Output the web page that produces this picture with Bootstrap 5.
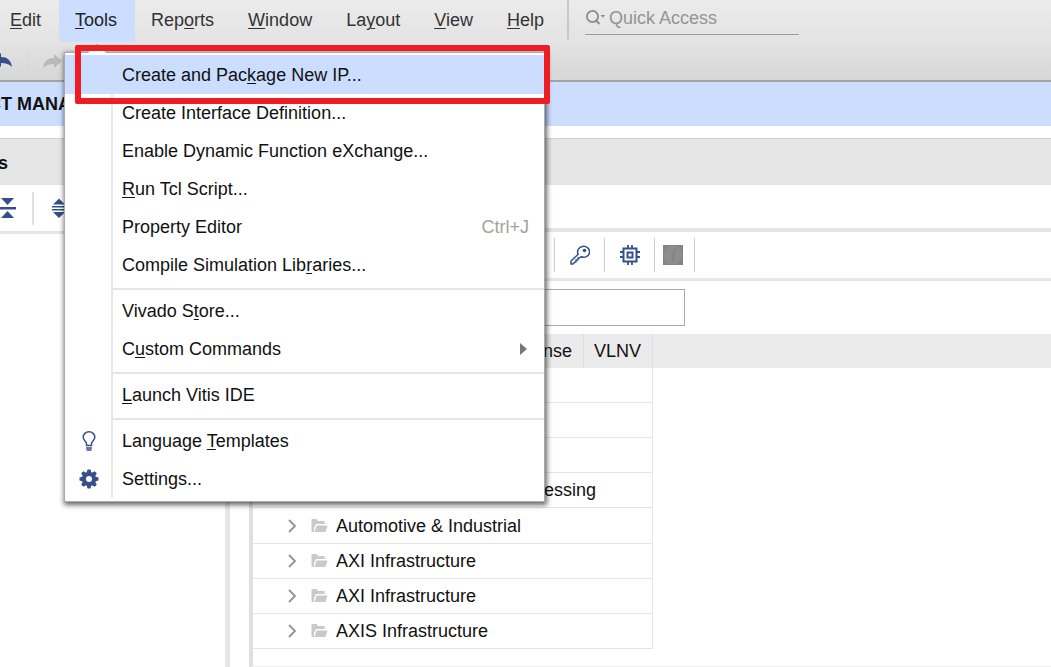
<!DOCTYPE html>
<html lang="en">
<head>
<meta charset="utf-8">
<meta name="viewport" content="width=device-width, initial-scale=1">
<title>Project Manager</title>
<link href="https://cdn.jsdelivr.net/npm/bootstrap@5.3.0/dist/css/bootstrap.min.css" rel="stylesheet">
<style>
  body { font: 18px/22px "Liberation Sans", Arial, sans-serif; color: #111; background: #fff; overflow: hidden; }
  svg { display: block; }
  u { text-decoration-thickness: 1px; text-underline-offset: 2px; }
  button { background: none; border: 0; padding: 0; }
  .app-header { background: linear-gradient(#ebebeb, #e4e4e4 50%, #d7d7d7); border-bottom: 2px solid #a2a4a8; }
  .menu-bar { height: 42px; }
  .menu-bar .nav-link { color: #333; padding: 9px 18px 11px 16px; }
  .menu-bar .nav-item:first-child .nav-link { padding-left: 10px; }
  .menu-bar .nav-link.active { background: #ccdeff; color: #222; }
  .search-area { border-left: 2px solid #c8c8c8; height: 40px; margin-left: 5px; padding-left: 16px; }
  .search-line { width: 214px; height: 35px; border-bottom: 1px solid #999; }
  .search-line input { border: 0; background: none; padding: 2px 0 0 3px; width: 180px; color: #555; outline: 0; }
  .search-line input::placeholder { color: #949494; opacity: 1; }
  .history-bar { height: 38px; }
  .history-bar button + button { border-left: 1px solid #d5d5d5; padding-left: 15px; margin-left: 14px; }
  .title-bar { background: #ccdeff; height: 44px; font-weight: bold; color: #111; }
  .title-bar span { margin-left: -73px; }
  .side-panel { width: 230px; border-right: 5px solid #e5e5e5; }
  .main-panel { margin-left: 19px; border-left: 4px solid #e0e0e0; border-bottom: 1px solid #eee; min-width: 0; }
  .panel-head { height: 47px; background: #e6e6e6; border-top: 1px solid #d2d2d2; font-weight: bold; padding-top: 2px; }
  .side-panel .panel-head span { margin-left: -63px; }
  .side-tools { height: 49px; border-bottom: 3px solid #e5e5e5; }
  .side-tools button { height: 33px; width: 50px; }
  .side-tools button:first-child { width: 34px; border-right: 2px solid #e0e0e0; }
  .tab-strip { height: 47px; border-bottom: 4px solid #e5e5e5; }
  .main-tools { height: 49px; border-bottom: 3px solid #e8e8e8; padding-left: 301px; }
  .main-tools button { width: 50px; height: 34px; border-left: 1px solid #ccc; }
  .main-tools button:last-child { width: 41px; padding-right: 3px; border-right: 1px solid #ccc; }
  .filter-row { height: 53px; padding-left: 12px; }
  .filter-row input { width: 350px; height: 37px; border: 1px solid #aaa; border-radius: 0; }
  .catalog { border-collapse: separate; border-spacing: 0; width: 400px; table-layout: fixed; }
  .catalog-wrap { background: linear-gradient(#ebebeb, #ebebeb) no-repeat 0 0 / 100% 34px; }
  .catalog th { height: 34px; font-weight: normal; border-right: 1px solid #ddd; padding: 0 14px 0 10px; }
  .catalog th:last-child { padding-right: 0; }
  .catalog td { height: 35px; padding: 0; border-bottom: 1px solid #e5e5e5; border-right: 1px solid #e5e5e5; white-space: nowrap; }
  .catalog tbody tr:nth-child(5n) td { height: 36px; }
  .twig { padding-left: 33px; }
  .twig button { width: 14px; margin-right: 11px; }
  .twig .folder { margin-right: 8px; }
  .tools-menu { position: absolute; left: 5px; top: 52px; width: 481px; padding: 2px 0 3px; margin: 0; border: 1px solid #aaa; border-radius: 0; background: #fff; box-shadow: 1px 2px 5px 1px rgba(0,0,0,.6); z-index: 10; }
  .tools-menu .dropdown-item { height: 38px; padding: 0 15px 0 0; color: #111; font-size: 18px; line-height: 22px; }
  .tools-menu .dropdown-item.picked { height: 39px; }
  .tools-menu .dropdown-item.picked, .tools-menu .dropdown-item:hover { background: #ccdeff; }
  .gutter { width: 48px; height: 38px; padding-left: 2px; margin-right: 9px; border-right: 2px solid #e8e8e8; }
  .picked .gutter { border-color: transparent; }
  .rule-row { height: 8px; padding-left: 46px; }
  .rule-row hr { margin: 0; height: 8px; border: 0; opacity: 1; background: linear-gradient(#e5e5e5,#e5e5e5) no-repeat 0 4px / 100% 2px; border-left: 2px solid #e8e8e8; }
  .shortcut { color: #a3a39b; }
  .callout { position: absolute; left: 10px; right: -6px; top: -8px; height: 59px; border: 6px solid #ee1c25; border-radius: 2px; pointer-events: none; }
  .menu-tip { position: absolute; left: 22px; top: -10px; }
</style>
</head>
<body>
<div class="d-flex flex-column vh-100">
  <header class="app-header">
    <div class="menu-bar d-flex">
      <ul class="nav flex-nowrap">
        <li class="nav-item"><a class="nav-link" href="#"><u>E</u>dit</a></li>
        <li class="nav-item position-relative">
          <a class="nav-link active" href="#" aria-expanded="true"><u>T</u>ools</a>
          <div class="tools-menu">
            <svg class="menu-tip" width="20" height="11" viewBox="0 0 20 11"><path d="M0 11 10 1l10 10z" fill="#fff"/><path d="M7 4l3-3 3 3" fill="none" stroke="#aaa"/></svg>
            <button class="dropdown-item picked d-flex align-items-center"><span class="gutter"></span><span>Create and Pac<u>k</u>age New IP...</span></button>
            <button class="dropdown-item d-flex align-items-center"><span class="gutter"></span>Create Interface Definition...</button>
            <button class="dropdown-item d-flex align-items-center"><span class="gutter"></span>Enable Dynamic Function eXchange...</button>
            <button class="dropdown-item d-flex align-items-center"><span class="gutter"></span><span><u>R</u>un Tcl Script...</span></button>
            <button class="dropdown-item d-flex align-items-center"><span class="gutter"></span>Property Editor<span class="shortcut ms-auto">Ctrl+J</span></button>
            <button class="dropdown-item d-flex align-items-center"><span class="gutter"></span><span>Compile Simulation Lib<u>r</u>aries...</span></button>
            <div class="rule-row"><hr></div>
            <button class="dropdown-item d-flex align-items-center"><span class="gutter"></span><span>Vivado S<u>t</u>ore...</span></button>
            <button class="dropdown-item d-flex align-items-center"><span class="gutter"></span><span>C<u>u</u>stom Commands</span><svg class="ms-auto" width="10" height="12" viewBox="0 0 10 12"><path d="M1 0l7 6-7 6z" fill="#777"/></svg></button>
            <div class="rule-row"><hr></div>
            <button class="dropdown-item d-flex align-items-center"><span class="gutter"></span><span><u>L</u>aunch Vitis IDE</span></button>
            <div class="rule-row"><hr></div>
            <button class="dropdown-item d-flex align-items-center"><span class="gutter d-flex align-items-center justify-content-center"><svg width="16" height="20" viewBox="0 0 16 20" fill="none" stroke="#34508a" stroke-width="1.500"><path d="M5.500 14.500v-2C5.500 10.500 2.200 9.500 2.200 6.300a5.800 5.500 0 0 1 11.600 0c0 3.200-3.300 4.200-3.300 6.200v2z"/><path d="M5 17h6M5.500 19h5"/></svg></span><span>Language <u>T</u>emplates</span></button>
            <button class="dropdown-item d-flex align-items-center"><span class="gutter d-flex align-items-center justify-content-center"><svg width="20" height="20" viewBox="-10 -10 20 20" fill="#34508a"><g id="teeth"><path d="M-2.500-6l1-3.500h3l1 3.500v12l-1 3.500h-3l-1-3.500z"/><path d="M-6-2.500l-3.500 1v3l3.500 1H6l3.500-1v-3L6-2.500z"/></g><use href="#teeth" transform="rotate(45)"/><circle r="7"/><circle r="3" fill="#fff"/></svg></span>Settings...</button>
            <div class="callout"></div>
          </div>
        </li>
        <li class="nav-item"><a class="nav-link" href="#">Rep<u>o</u>rts</a></li>
        <li class="nav-item"><a class="nav-link" href="#"><u>W</u>indow</a></li>
        <li class="nav-item"><a class="nav-link" href="#">La<u>y</u>out</a></li>
        <li class="nav-item"><a class="nav-link" href="#"><u>V</u>iew</a></li>
        <li class="nav-item"><a class="nav-link" href="#"><u>H</u>elp</a></li>
      </ul>
      <div class="search-area">
        <div class="search-line d-flex align-items-center">
          <svg width="21" height="16" viewBox="0 0 21 16" fill="none" stroke="#8c8c8c" stroke-width="1.800"><circle cx="7.500" cy="7.500" r="5.600"/><path d="M10.500 11l4 4"/><path d="M15.500 6h4.500l-2.200 2.800z" fill="#8c8c8c" stroke="none"/></svg>
          <input type="text" placeholder="Quick Access" aria-label="Quick Access">
        </div>
      </div>
    </div>
    <div class="history-bar d-flex align-items-center">
      <button aria-label="Undo"><svg width="13" height="16" viewBox="0 0 13 16"><path d="M0 1l1-1v4c6 0 10 3 11 10-3-3-6-4-11-4v4l-1-1z" fill="#34508a"/></svg></button>
      <button aria-label="Redo"><svg width="20" height="24" viewBox="0 0 20 24"><path d="M0 19C1 12 5 9 11 9V5l8 7-8 7v-4c-4 0-8 1-11 4z" fill="#b9b9b9"/></svg></button>
    </div>
  </header>
  <div class="title-bar d-flex align-items-center text-nowrap"><span>PROJECT MANAGER</span></div>
  <main class="d-flex flex-grow-1 pt-2 mt-1">
    <section class="side-panel flex-shrink-0">
      <div class="panel-head d-flex align-items-center"><span>Sources</span></div>
      <div class="side-tools d-flex align-items-center">
        <button aria-label="Collapse all"><svg width="16" height="20" viewBox="0 0 16 20" fill="#34508a"><path d="M1 0h13L7.500 7zM0 9h16v2.500H0zM1 20h13l-6.500-7z"/></svg></button>
        <button class="d-flex justify-content-center align-items-center" aria-label="Expand all"><svg width="16" height="20" viewBox="0 0 16 20" fill="#34508a"><path d="M2 6.500h12L8 .5zM1 8h14v1.500H1zM1 11h14v1.500H1zM2 14h12l-6 6z"/></svg></button>
      </div>
    </section>
    <section class="main-panel flex-grow-1">
      <div class="panel-head"></div>
      <div class="tab-strip"></div>
      <div class="main-tools d-flex align-items-center">
        <button class="d-flex align-items-center justify-content-center" aria-label="License"><svg width="20" height="20" viewBox="0 0 20 20" fill="none" stroke="#34508a" stroke-width="1.500"><path d="M8.200 9.300A6 5.500 0 1 1 11 11.800L9.500 13H8v2H6v2H5l-2 2H1v-3z" stroke-linejoin="round"/><circle cx="14.500" cy="5.500" r="1.800" fill="#34508a" stroke="none"/></svg></button>
        <button class="d-flex align-items-center justify-content-center" aria-label="Compatible devices"><svg width="20" height="20" viewBox="0 0 20 20" fill="none" stroke="#34508a" stroke-width="2"><rect x="3.500" y="3.500" width="13" height="13"/><rect x="7.500" y="7.500" width="5" height="5"/><path d="M8 0v3M12 0v3M8 17v3M12 17v3M0 7h3M0 12h3M17 7h3M17 12h3" stroke-width="1.800"/></svg></button>
        <button class="d-flex align-items-center justify-content-center" aria-label="Details"><svg width="20" height="20" viewBox="0 0 20 20"><path d="M0 0h20v20H0z" fill="#848484"/><circle cx="10" cy="10" r="9.500" fill="#8d8d8d"/><path d="M10.500 4.500h2v2h-2zM8.500 8.500H12l-1.500 6H12v1H8.500l1.300-6H8.500z" fill="#808080"/></svg></button>
      </div>
      <div class="filter-row d-flex align-items-center">
        <label for="filter" class="me-2">Search:</label>
        <input id="filter" type="text">
      </div>
      <div class="catalog-wrap">
        <table class="catalog">
          <colgroup><col style="width:247px"><col style="width:84px"><col style="width:69px"></colgroup>
          <thead><tr><th aria-label="Name"></th><th class="text-end">License</th><th>VLNV</th></tr></thead>
          <tbody>
            <tr><td colspan="3"></td></tr>
            <tr><td colspan="3"></td></tr>
            <tr><td colspan="3"></td></tr>
            <tr><td colspan="3"><div class="twig d-flex align-items-center"><button aria-label="Expand"><svg width="14" height="14" viewBox="0 0 14 14" fill="none" stroke="#929292" stroke-width="1.800"><path id="chev" d="M3 1l6 6-6 6"/></svg></button><svg class="folder" width="17" height="14" viewBox="0 0 17 14"><path id="fold" d="M1 0h4.500l1.500 2h6.500v2.500H15V5H5L3 9v4H1.500Q.5 13 .5 12V1Q.5 0 1 0zM5.500 6.500h11L14.500 13H3.500z" fill="#c9c9c9"/></svg>Audio Connectivity &amp; Processing</div></td></tr>
            <tr><td colspan="3"><div class="twig d-flex align-items-center"><button aria-label="Expand"><svg width="14" height="14" fill="none" stroke="#929292" stroke-width="1.800"><use href="#chev"/></svg></button><svg class="folder" width="17" height="14"><use href="#fold"/></svg>Automotive &amp; Industrial</div></td></tr>
            <tr><td colspan="3"><div class="twig d-flex align-items-center"><button aria-label="Expand"><svg width="14" height="14" fill="none" stroke="#929292" stroke-width="1.800"><use href="#chev"/></svg></button><svg class="folder" width="17" height="14"><use href="#fold"/></svg>AXI Infrastructure</div></td></tr>
            <tr><td colspan="3"><div class="twig d-flex align-items-center"><button aria-label="Expand"><svg width="14" height="14" fill="none" stroke="#929292" stroke-width="1.800"><use href="#chev"/></svg></button><svg class="folder" width="17" height="14"><use href="#fold"/></svg>AXI Infrastructure</div></td></tr>
            <tr><td colspan="3"><div class="twig d-flex align-items-center"><button aria-label="Expand"><svg width="14" height="14" fill="none" stroke="#929292" stroke-width="1.800"><use href="#chev"/></svg></button><svg class="folder" width="17" height="14"><use href="#fold"/></svg>AXIS Infrastructure</div></td></tr>
          </tbody>
        </table>
      </div>
    </section>
  </main>
</div>
<script src="https://cdn.jsdelivr.net/npm/bootstrap@5.3.0/dist/js/bootstrap.bundle.min.js"></script>
</body>
</html>
